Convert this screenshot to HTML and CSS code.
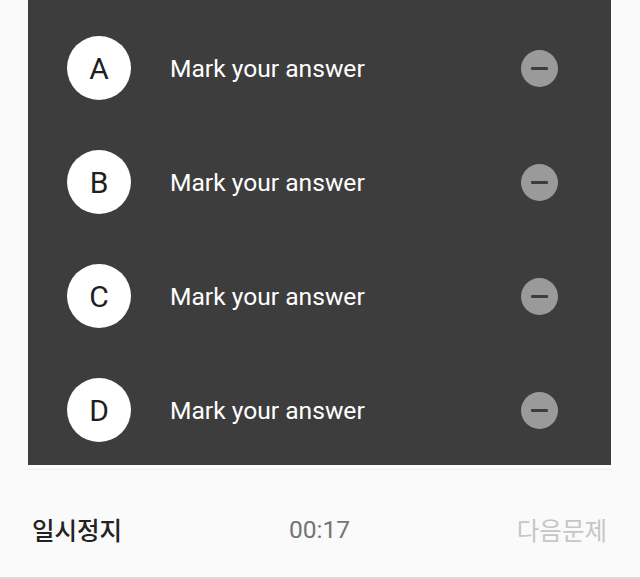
FILE: index.html
```html
<!DOCTYPE html>
<html lang="ko">
<head>
<meta charset="utf-8">
<link rel="stylesheet" href="styles.css">
</head>
<body>
<div class="screen">
  <section class="panel">
    <div class="row">
      <div class="badge">A</div>
      <div class="label">Mark your answer</div>
      <div class="minus"><span class="bar"></span></div>
    </div>
    <div class="row">
      <div class="badge">B</div>
      <div class="label">Mark your answer</div>
      <div class="minus"><span class="bar"></span></div>
    </div>
    <div class="row">
      <div class="badge">C</div>
      <div class="label">Mark your answer</div>
      <div class="minus"><span class="bar"></span></div>
    </div>
    <div class="row">
      <div class="badge">D</div>
      <div class="label">Mark your answer</div>
      <div class="minus"><span class="bar"></span></div>
    </div>
  </section>
  <div class="divider"></div>
  <footer class="footer">
    <div class="pause">일시정지</div>
    <div class="timer">00:17</div>
    <div class="next">다음문제</div>
  </footer>
</div>
</body>
</html>
```

FILE: styles.css
```css
html, body {
  margin: 0;
  padding: 0;
  background: #fafafa;
}
.screen {
  width: 640px;
  height: 579px;
  display: flex;
  flex-direction: column;
  background: #fafafa;
  font-family: Roboto, "Noto Sans CJK KR", sans-serif;
  overflow: hidden;
}
.panel {
  margin: 0 29px 0 28px;
  height: 465px;
  box-sizing: border-box;
  padding-top: 11px;
  background: #3d3d3d;
  overflow: hidden;
}
.row {
  height: 114px;
  display: flex;
  align-items: center;
  padding-left: 39px;
  padding-right: 53px;
}
.badge {
  width: 64px;
  height: 64px;
  border-radius: 50%;
  background: #ffffff;
  color: #1f1f1f;
  display: flex;
  align-items: center;
  justify-content: center;
  font-size: 30px;
  flex: none;
}
.label {
  flex: 1;
  margin-left: 39px;
  color: #ffffff;
  font-size: 24.6px;
}
.minus {
  width: 37px;
  height: 37px;
  border-radius: 50%;
  background: #9a9a9a;
  display: flex;
  align-items: center;
  justify-content: center;
  flex: none;
}
.bar {
  width: 17px;
  height: 3px;
  background: #3d3d3d;
  border-radius: 1px;
}
.divider {
  height: 1px;
  margin: 4px 28px 0;
  background: #efefef;
}
.footer {
  flex: 1;
  display: grid;
  grid-template-columns: 1fr auto 1fr;
  align-items: center;
  padding: 12px 33px 0 32px;
  border-bottom: 2px solid #d9d9d9;
  font-size: 24.5px;
}
.pause {
  font-family: "Noto Sans CJK KR", sans-serif;
  font-weight: 500;
  color: #222222;
}
.timer {
  font-family: Roboto, sans-serif;
  font-size: 24.6px;
  color: #757575;
}
.next {
  font-family: "Noto Sans CJK KR", sans-serif;
  color: #c6c6c6;
  text-align: right;
}
```
